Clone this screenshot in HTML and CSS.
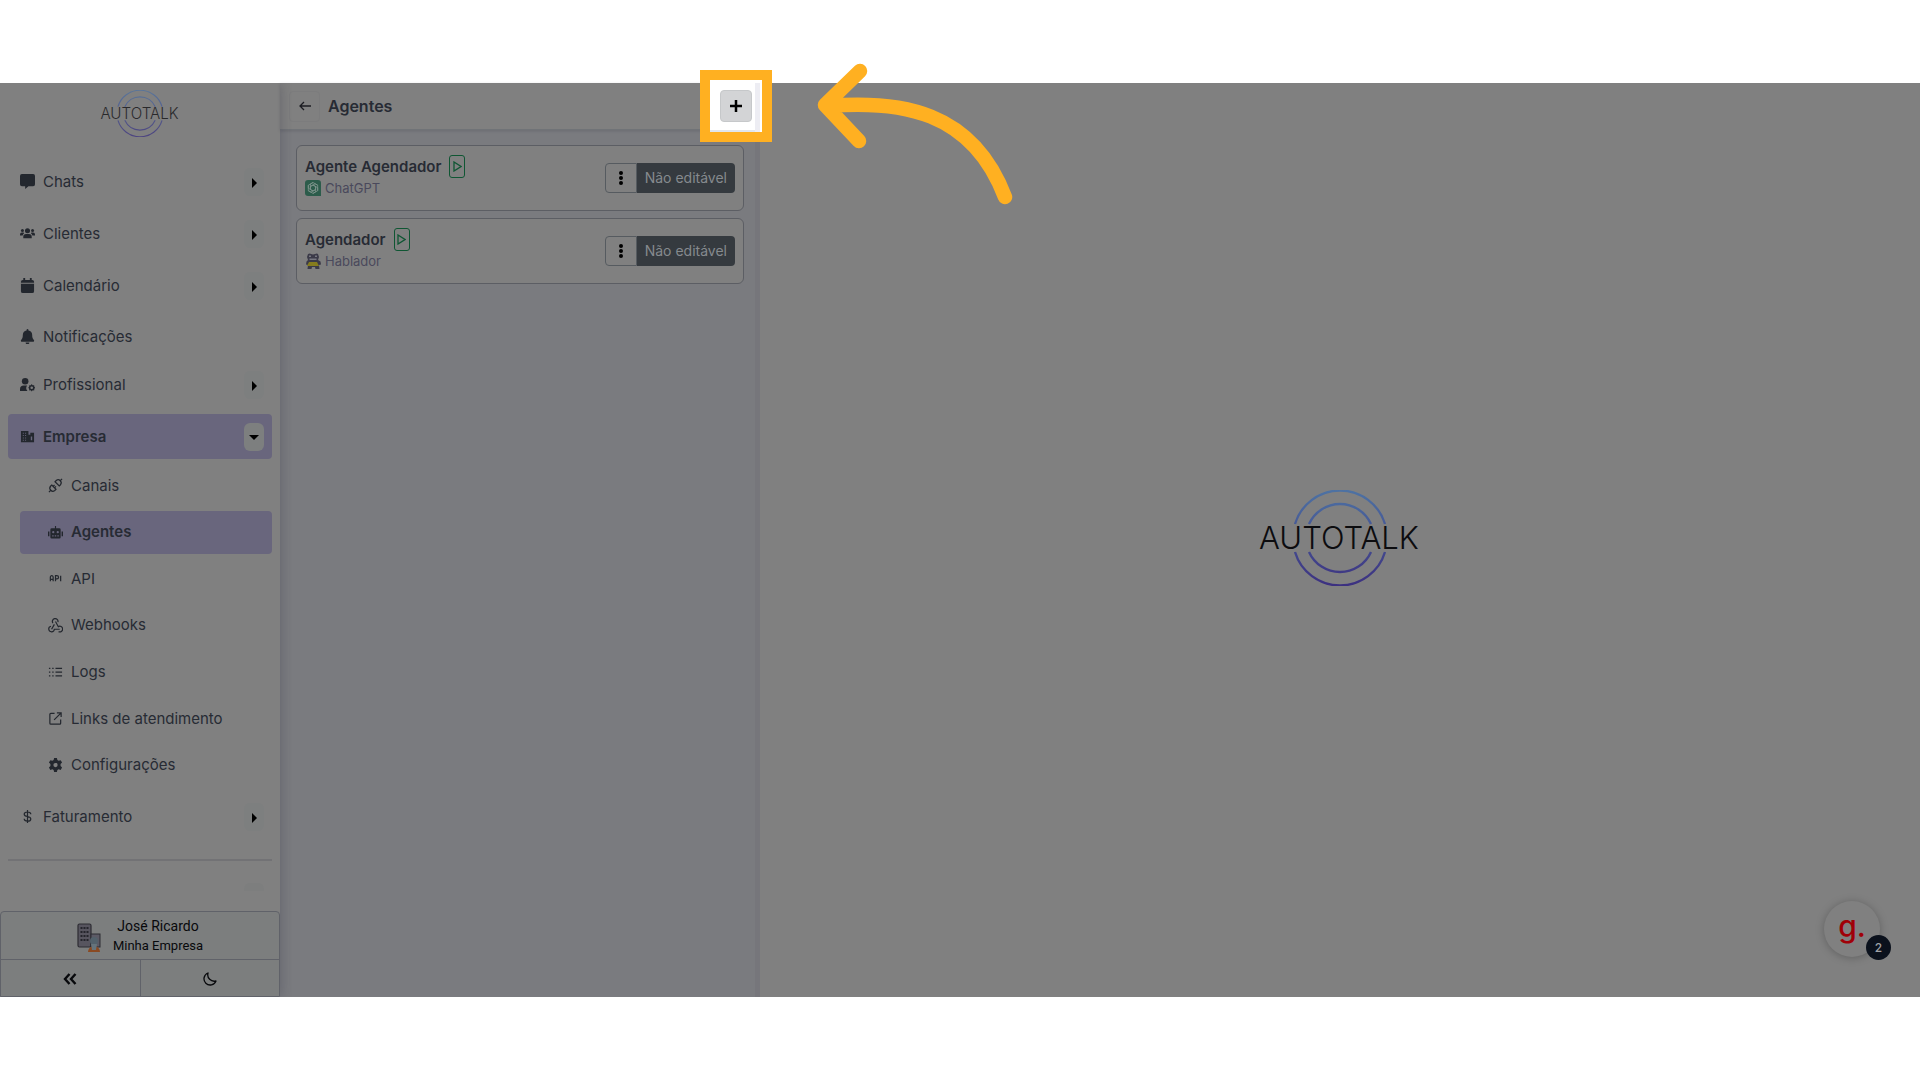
FILE: index.html
```html
<!DOCTYPE html>
<html lang="pt-BR">
<head>
    <meta charset="UTF-8">
    <meta name="viewport" content="width=device-width, initial-scale=1.0">
    <title>Autotalk - Agentes</title>
    <link rel="stylesheet" href="styles.css">
</head>
<body>

<!-- Shared logo -->
<svg class="defs" width="0" height="0" aria-hidden="true">
    <defs>
        <linearGradient id="ring" x1="0" y1="0" x2="0" y2="96" gradientUnits="userSpaceOnUse">
            <stop offset="0" stop-color="#4d72a3"/>
            <stop offset="1" stop-color="#3c3080"/>
        </linearGradient>
        <symbol id="logo" viewBox="0 0 162 96">
            <g fill="none" stroke="url(#ring)" stroke-width="2.4">
                <path d="M36 34A47 47 0 0 1 126 34M50 34A34 34 0 0 1 112 34"/>
                <path d="M36 62A47 47 0 0 0 126 62M50 62A34 34 0 0 0 112 62"/>
            </g>
            <text x="80" y="59" text-anchor="middle" class="logo-text">AUTOTALK</text>
        </symbol>
    </defs>
</svg>

<div class="app">
    <!-- Sidebar -->
    <aside class="sidebar">
        <svg class="logo-small" role="img" aria-label="Autotalk"><use href="#logo"/></svg>

        <nav class="menu">
            <div class="item">
                <svg class="icon" viewBox="0 0 16 16"><path d="M2 0h12a2 2 0 0 1 2 2v9a2 2 0 0 1-2 2H9l-3.500 3V13H2a2 2 0 0 1-2-2V2a2 2 0 0 1 2-2z"/></svg>
                <a href="#">Chats</a>
                <button class="toggle" aria-label="Abrir Chats"><svg viewBox="0 0 5 10"><path d="M0 0l5 5-5 5z"/></svg></button>
            </div>
            <div class="item">
                <svg class="icon" viewBox="0 0 16 16"><circle cx="8" cy="5" r="2.700"/><circle cx="2.600" cy="4.800" r="1.600"/><circle cx="13.400" cy="4.800" r="1.600"/><path d="M3.500 13v-1.500a3 3 0 0 1 3-3h3a3 3 0 0 1 3 3V13zM0 10V9a2 2 0 0 1 2-2h1.800l.6.8A4 4 0 0 0 2.800 10zM16 10V9a2 2 0 0 0-2-2h-1.800l-.6.8A4 4 0 0 1 13.200 10z"/></svg>
                <a href="#">Clientes</a>
                <button class="toggle" aria-label="Abrir Clientes"><svg viewBox="0 0 5 10"><path d="M0 0l5 5-5 5z"/></svg></button>
            </div>
            <div class="item">
                <svg class="icon" viewBox="0 0 16 16"><path d="M3.500 0h2v2h5V0h2v2H13a2 2 0 0 1 2 2v1H1V4a2 2 0 0 1 2-2h.5zM1 6h14v8a2 2 0 0 1-2 2H3a2 2 0 0 1-2-2z"/></svg>
                <a href="#">Calendário</a>
                <button class="toggle" aria-label="Abrir Calendário"><svg viewBox="0 0 5 10"><path d="M0 0l5 5-5 5z"/></svg></button>
            </div>
            <div class="item plain">
                <svg class="icon" viewBox="0 0 16 16"><path d="M8 0a1 1 0 0 1 1 1v.7A5 5 0 0 1 13 6.500c0 3 .6 4 1.800 5.200.6.7.2 1.800-.8 1.800H2c-1 0-1.400-1.100-.8-1.800C2.400 10.500 3 9.500 3 6.500a5 5 0 0 1 4-4.800V1a1 1 0 0 1 1-1zM6 14.300h4a2 2 0 0 1-4 0z"/></svg>
                <a href="#">Notificações</a>
            </div>
            <div class="item">
                <svg class="icon" viewBox="0 0 16 16"><circle cx="5.500" cy="4.500" r="3.500"/><path d="M0 15v-2a4 4 0 0 1 4-4h3.500a5 5 0 0 0 .5 6z"/><path fill-rule="evenodd" d="M12.500 7.500l1 1.300 1.600-.1.200 1.700.9 1.100-.9 1.100-.2 1.700-1.600-.1-1 1.300-1-1.300-1.600.1-.2-1.700-.9-1.100.9-1.100.2-1.700 1.600.1zm0 2.600a1.400 1.400 0 1 0 0 2.800 1.400 1.400 0 0 0 0-2.800z"/></svg>
                <a href="#">Profissional</a>
                <button class="toggle" aria-label="Abrir Profissional"><svg viewBox="0 0 5 10"><path d="M0 0l5 5-5 5z"/></svg></button>
            </div>
            <div class="item selected">
                <svg class="icon" viewBox="0 0 16 16"><path fill-rule="evenodd" d="M1 2h8v4h2V4h4v10H1zM3 4v1h1V4zm2.500 0v1h1V4zM3 6.500v1h1v-1zm2.500 0v1h1v-1zM3 9v1h1V9zm2.500 0v1h1V9zM3 11.500v1h1v-1zm2.500 0v1h1v-1zM11.500 8v4H13V8z"/></svg>
                <a href="#">Empresa</a>
                <button class="toggle" aria-label="Fechar Empresa"><svg class="down" viewBox="0 0 10 5"><path d="M0 0h10L5 5z"/></svg></button>
            </div>

            <div class="submenu">
                <div class="item">
                    <svg class="icon line" viewBox="0 0 16 16"><path d="M1 15l2.500-2.500M4 7.500L8.500 12l-1.300 1.300a3.200 3.200 0 0 1-4.500-4.500zM5.500 9L7 7.500M7 10.500L8.500 9M15 1l-2.500 2.500M7.500 4L12 8.500l1.300-1.300a3.200 3.200 0 0 0-4.500-4.500z"/></svg>
                    <a href="#">Canais</a>
                </div>
                <div class="item selected">
                    <svg class="icon" viewBox="0 0 16 16"><path fill-rule="evenodd" d="M7.400 1h1.200v2.500H12A1.500 1.500 0 0 1 13.500 5v8a1.500 1.500 0 0 1-1.500 1.500H4A1.500 1.500 0 0 1 2.500 13V5A1.500 1.500 0 0 1 4 3.500h3.400zM5.600 6.500a1.200 1.200 0 1 0 0 2.400 1.200 1.200 0 0 0 0-2.400zm4.800 0a1.200 1.200 0 1 0 0 2.400 1.200 1.200 0 0 0 0-2.400zM4.500 11v1.200H6V11zm2.700 0v1.200h1.600V11zM10 11v1.200h1.500V11z"/><path d="M0 7h1.500v5H0zM14.500 7H16v5h-1.500z"/></svg>
                    <a href="#">Agentes</a>
                </div>
                <div class="item">
                    <svg class="icon line" viewBox="0 0 16 16"><path d="M2.500 11V6.500a1.500 1.500 0 0 1 3 0V11M2.500 9h3M8 11V5h1.500a1.700 1.700 0 0 1 0 3.500H8M13.500 5v6"/></svg>
                    <a href="#">API</a>
                </div>
                <div class="item">
                    <svg class="icon line" viewBox="0 0 16 16"><path d="M5.300 5.500a3 3 0 1 1 5.300-1.200M8 3.800l3 5.500a3 3 0 1 1 .3 5.200M12.500 12H6.800a3 3 0 1 1-3.600-3.200M3.800 12l3-5.200"/></svg>
                    <a href="#">Webhooks</a>
                </div>
                <div class="item">
                    <svg class="icon line" viewBox="0 0 16 16"><path d="M1 3.500h1.500M1 7.500h1.500M1 11.500h1.500M4.500 3.500H6M4.500 7.500H6M4.500 11.500H6M8 3.500h7M8 7.500h7M8 11.500h7"/></svg>
                    <a href="#">Logs</a>
                </div>
                <div class="item">
                    <svg class="icon line" viewBox="0 0 16 16"><path d="M7 2.500H3A1 1 0 0 0 2 3.500V13a1 1 0 0 0 1 1h9.500a1 1 0 0 0 1-1V9M9.500 2H14v4.500M14 2L6.500 9.500"/></svg>
                    <a href="#">Links de atendimento</a>
                </div>
                <div class="item">
                    <svg class="icon" viewBox="0 0 16 16"><path fill-rule="evenodd" d="M6.500 0h3l.5 2.200 1.300.8 2.200-.7 1.500 2.600-1.600 1.600v2l1.600 1.600-1.500 2.600-2.200-.7-1.300.8-.5 2.200h-3L6 12.800 4.700 12l-2.200.7L1 10.100l1.600-1.600v-2L1 4.900l1.500-2.600 2.200.7L6 2.200zM8 5.200a2.300 2.300 0 1 0 0 4.600 2.300 2.300 0 0 0 0-4.600z"/></svg>
                    <a href="#">Configurações</a>
                </div>
            </div>

            <div class="item">
                <svg class="icon line" viewBox="0 0 16 16"><path d="M8 1v14M11.500 5.500C11.500 4 10 3.200 8 3.200S4.500 4 4.500 5.500 6 7.700 8 8s3.500 1 3.500 2.600S10 13 8 13s-3.500-.9-3.500-2.500"/></svg>
                <a href="#">Faturamento</a>
                <button class="toggle" aria-label="Abrir Faturamento"><svg viewBox="0 0 5 10"><path d="M0 0l5 5-5 5z"/></svg></button>
            </div>
            <hr>
            <div class="cut-toggle"></div>
        </nav>

        <div class="account">
            <button class="profile">
                <svg class="avatar" viewBox="0 0 24 30"><rect x="1" y="1" width="13" height="23" rx="1.500" fill="#57555f" stroke="#2d2c33" stroke-width="1.200"/><path d="M3.500 5h8M3.500 9h8M3.500 13h8M3.500 17h8" stroke="#25252c" stroke-width="2" stroke-dasharray="2 1"/><rect x="14" y="11" width="9" height="13" fill="#5c5b66" stroke="#2d2c33"/><path d="M11 29a6 6 0 0 1 12 0z" fill="#8a4a22"/><circle cx="17" cy="18" r="4" fill="#52616b"/><path d="M14 21h6l-1 6h-4z" fill="#65747c"/></svg>
                <span class="names">
                    <span class="user">José Ricardo</span>
                    <span class="company">Minha Empresa</span>
                </span>
            </button>
            <div class="tools">
                <button aria-label="Recolher menu"><svg viewBox="0 0 14 12"><path d="M6.500 1L2 6l4.500 5M12.500 1L8 6l4.500 5" stroke-width="2.400"/></svg></button>
                <button aria-label="Modo escuro"><svg viewBox="0 0 14 14"><path d="M5 1a6.200 6.200 0 1 0 8 8A6.500 6.500 0 0 1 5 1z" stroke-width="1.300" stroke-linejoin="round"/></svg></button>
            </div>
        </div>
    </aside>

    <!-- Agents list -->
    <section class="panel">
        <header class="panel-header">
            <button class="back" aria-label="Voltar"><svg viewBox="0 0 12 10"><path d="M12 5H1M5 1L1 5l4 4"/></svg></button>
            <h1>Agentes</h1>
            <div class="add-wrap">
                <div class="spotlight"></div>
                <button class="add" aria-label="Adicionar agente"><svg viewBox="0 0 12 12"><path d="M6 0v12M0 6h12"/></svg></button>
                <svg class="arrow" viewBox="0 0 200 150"><path d="M46 11L11 45l34 36M13 46C86 40 158 50 191 137"/></svg>
            </div>
        </header>

        <div class="cards">
            <article class="card">
                <div class="info">
                    <div class="title">
                        <h2>Agente Agendador</h2>
                        <button class="play" aria-label="Testar agente"><svg viewBox="0 0 9 11"><path d="M1 1l7 4.500L1 10z"/></svg></button>
                    </div>
                    <div class="model">
                        <svg viewBox="0 0 16 16"><path d="M3 0h10a3 3 0 0 1 3 3v13H3a3 3 0 0 1-3-3V3a3 3 0 0 1 3-3z" fill="#2c5c4b"/><g fill="none" stroke="#82958e" stroke-width="0.8"><path d="M8 2.500l4.700 2.700v5.500L8 13.400l-4.700-2.700V5.200z"/><path d="M8 5l2.600 1.500v3L8 11l-2.600-1.500v-3zM8 2.500L5.400 4v5.500M12.700 5.200L10 3.800 5.400 6.500M12.700 10.700v-3L8 5M8 13.400l2.600-1.500V6.500M3.300 10.700L6 12.200l4.600-2.700M3.300 5.200v3L8 11"/></g></svg>
                        <span>ChatGPT</span>
                    </div>
                </div>
                <div class="group">
                    <button class="more" aria-label="Opções"><svg viewBox="0 0 4 14"><circle cx="2" cy="2" r="2"/><circle cx="2" cy="7" r="2"/><circle cx="2" cy="12" r="2"/></svg></button>
                    <button class="locked">Não editável</button>
                </div>
            </article>

            <article class="card">
                <div class="info">
                    <div class="title">
                        <h2>Agendador</h2>
                        <button class="play" aria-label="Testar agente"><svg viewBox="0 0 9 11"><path d="M1 1l7 4.500L1 10z"/></svg></button>
                    </div>
                    <div class="model">
                        <svg viewBox="0 0 16 16"><path d="M3 1q2-1 3 0l2 .6L10 1q2-1 3 0l1 3-1 3 2.500 1.500.5 3-2 .5.500 4h-4l-.5-2h-3l-.5 2h-4l.5-4-2-.5.5-3L3 7 2 4z" fill="#3b3a48"/><path d="M4 2.500h2v1.500H4zM10 2.500h2v1.500h-2zM4.500 5.500h7V7h-7z" fill="#777780"/><path d="M4 9h8l2 4H2z" fill="#857c1e"/></svg>
                        <span>Hablador</span>
                    </div>
                </div>
                <div class="group">
                    <button class="more" aria-label="Opções"><svg viewBox="0 0 4 14"><circle cx="2" cy="2" r="2"/><circle cx="2" cy="7" r="2"/><circle cx="2" cy="12" r="2"/></svg></button>
                    <button class="locked">Não editável</button>
                </div>
            </article>
        </div>
    </section>

    <!-- Empty state -->
    <main class="content">
        <svg class="logo-big" role="img" aria-label="Autotalk"><use href="#logo"/></svg>
        <button class="widget">g.<span class="badge">2</span></button>
    </main>
</div>

</body>
</html>
```
FILE: styles.css
```css
* {
    box-sizing: border-box;
}
body {
    display: flex;
    min-height: 100vh;
    margin: 0;
    padding: 83px 0;
    background: #fff;
    color: #272b34;
    font-family: Inter, sans-serif;
    font-size: 15px;
    line-height: 20px;
}
button {
    padding: 0;
    border: 0;
    background: none;
    color: inherit;
    font: inherit;
    cursor: pointer;
}
svg {
    display: block;
}
h1, h2 {
    margin: 0;
    font-size: 16px;
    font-weight: 600;
}
.defs {
    position: absolute;
}
.logo-text {
    font-family: Inter, sans-serif;
    font-size: 31px;
    font-weight: 300;
    fill: #0c0c0f;
}
.app {
    display: flex;
    flex: 1;
    background: #808080;
}

/* Sidebar */
.sidebar {
    display: flex;
    flex: 0 0 280px;
    flex-direction: column;
    position: relative;
    box-shadow: 0 0 12px rgba(40, 40, 60, 0.3);
    clip-path: inset(0 -12px 0 0);
}
.logo-small {
    width: 80px;
    height: 47px;
    margin: 7px auto 22px;
    opacity: 0.75;
}
.menu {
    display: flex;
    flex: 1;
    flex-direction: column;
    gap: 7px;
    padding: 0 8px;
}
.item {
    display: flex;
    align-items: center;
    gap: 8px;
    height: 45px;
    padding: 0 8px 0 12px;
    border-radius: 4px;
}
.item.plain {
    height: 40px;
    padding-top: 3px;
}
.item a {
    flex: 1;
    color: inherit;
    text-decoration: none;
}
.item.selected {
    background: #69667d;
    font-weight: 600;
}
.icon {
    width: 15px;
    height: 15px;
    fill: #23272e;
}
.icon.line {
    fill: none;
    stroke: #23272e;
    stroke-width: 1.3;
}
.toggle {
    display: flex;
    align-items: center;
    justify-content: center;
    width: 20px;
    height: 28px;
    padding-top: 2px;
    border-radius: 6px;
    background: #7d7f7f;
}
.toggle svg {
    width: 5px;
    height: 10px;
}
.toggle svg.down {
    width: 10px;
    height: 5px;
}
.submenu {
    display: flex;
    flex-direction: column;
    justify-content: space-between;
    height: 323px;
    margin-top: -2px;
    padding-left: 12px;
}
.submenu .item {
    height: 43px;
    padding-left: 28px;
}
.menu hr {
    width: 100%;
    margin: 13px 0 0;
    border: 0;
    border-top: 2px solid #727275;
}
.cut-toggle {
    align-self: flex-end;
    width: 20px;
    height: 8px;
    margin: 15px 8px 0;
    border-radius: 6px 6px 0 0;
    background: #7d7e7e;
}
.account {
    border: 1px solid #606269;
    border-radius: 4px 4px 0 0;
    background: #7c7e7e;
    color: #08090c;
}
.profile {
    display: flex;
    align-items: center;
    justify-content: center;
    gap: 12px;
    width: 100%;
    height: 47px;
}
.avatar {
    width: 24px;
    height: 30px;
    margin-top: 4px;
}
.names {
    display: flex;
    flex-direction: column;
    font-family: Roboto, sans-serif;
}
.user {
    font-size: 14px;
}
.company {
    font-size: 13px;
}
.tools {
    display: flex;
    border-top: 1px solid #606269;
}
.tools button {
    display: flex;
    flex: 1;
    align-items: center;
    justify-content: center;
    height: 36px;
    padding-top: 2px;
}
.tools button + button {
    border-left: 1px solid #606269;
}
.tools svg {
    width: 14px;
    height: 14px;
    fill: none;
    stroke: #08090c;
}

/* Agents list */
.panel {
    flex: 0 0 480px;
    border-right: 5px solid #76767b;
    background: #7a7b7f;
}
.panel-header {
    display: flex;
    align-items: center;
    gap: 8px;
    height: 47px;
    padding: 0 3px 0 9px;
    border-bottom: 1px solid #707377;
    background: #808080;
    box-shadow: 0 1px 3px rgba(40, 40, 60, 0.2);
}
.panel-header h1 {
    flex: 1;
}
.back {
    display: flex;
    align-items: center;
    justify-content: center;
    width: 31px;
    height: 31px;
    border: 1px solid #7c7c7d;
    border-radius: 4px;
}
.back svg {
    width: 12px;
    height: 10px;
    fill: none;
    stroke: #1c1d22;
    stroke-width: 1.3;
}
.add-wrap {
    position: relative;
}
.add {
    display: flex;
    align-items: center;
    justify-content: center;
    position: relative;
    width: 32px;
    height: 32px;
    border: 1px solid #c6c8ca;
    border-radius: 4px;
    background: #d3d4d6;
}
.add svg {
    width: 12px;
    height: 12px;
    stroke: #000;
    stroke-width: 2.5;
}
/* tutorial highlight around the add button */
.spotlight {
    position: absolute;
    inset: -20px;
    border: 10px solid #ffb021;
    background:
        linear-gradient(#ededf3, #ededf3) 45px 3px / 5px 100% no-repeat,
        linear-gradient(#e0e6ec, #e0e6ec) 0 100% / 45px 2px no-repeat,
        #fff;
}
.arrow {
    position: absolute;
    top: -30px;
    left: 94px;
    width: 200px;
    height: 150px;
    fill: none;
    stroke: #ffb021;
    stroke-width: 14.5;
    stroke-linecap: round;
    stroke-linejoin: round;
    pointer-events: none;
}
.cards {
    display: flex;
    flex-direction: column;
    gap: 7px;
    padding: 15px 11px 15px 16px;
}
.card {
    display: flex;
    align-items: center;
    justify-content: space-between;
    height: 66px;
    padding: 0 8px;
    border: 1px solid #5c5e64;
    border-radius: 6px;
    background: #808080;
}
.info {
    padding-bottom: 3px;
}
.title {
    display: flex;
    align-items: center;
    gap: 8px;
}
.card h2 {
    font-size: 15px;
}
.play {
    display: flex;
    align-items: center;
    justify-content: center;
    width: 16px;
    height: 23px;
    border: 1px solid #0f5633;
    border-radius: 3px;
}
.play svg {
    width: 9px;
    height: 11px;
    fill: none;
    stroke: #0f5633;
    stroke-width: 1.3;
}
.model {
    display: flex;
    align-items: center;
    gap: 4px;
    color: #4a495c;
    font-size: 13px;
}
.model svg {
    width: 16px;
    height: 16px;
}
.group {
    display: flex;
    height: 30px;
}
.more {
    display: flex;
    align-items: center;
    justify-content: center;
    width: 32px;
    border: 1px solid #565b60;
    border-radius: 4px 0 0 4px;
}
.more svg {
    width: 4px;
    height: 14px;
}
.locked {
    padding: 0 8px;
    border-radius: 0 4px 4px 0;
    background: #353a3f;
    color: #868a8e;
    font-size: 14px;
}

/* Empty state */
.content {
    display: flex;
    flex: 1;
    align-items: center;
    justify-content: center;
    position: relative;
}
.logo-big {
    width: 162px;
    height: 96px;
    margin-bottom: 4px;
}
.widget {
    position: absolute;
    right: 40px;
    bottom: 40px;
    width: 56px;
    height: 56px;
    padding-bottom: 6px;
    border-radius: 50%;
    background: #808080;
    box-shadow: 0 1px 8px rgba(0, 0, 0, 0.25);
    color: #a00008;
    font-size: 30px;
    font-weight: 500;
}
.badge {
    position: absolute;
    right: -11px;
    bottom: -3px;
    width: 25px;
    height: 25px;
    border-radius: 50%;
    background: #0b111c;
    color: #a0a2a6;
    font-size: 12px;
    line-height: 25px;
}
```
